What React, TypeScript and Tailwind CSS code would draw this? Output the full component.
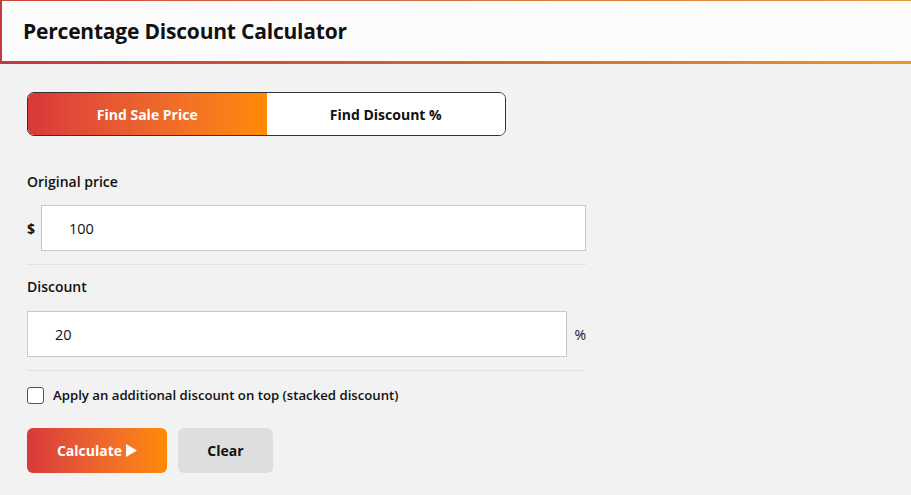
import React, { useState } from "react";

export default function App() {
  const [mode, setMode] = useState<"sale" | "pct">("sale");
  const [price, setPrice] = useState("100");
  const [disc, setDisc] = useState("20");
  const [stack, setStack] = useState(false);

  return (
    <div
      className="w-[911px] h-[495px] overflow-hidden bg-[#f2f2f2] text-[#111]"
      style={{ fontFamily: '"Open Sans", "Noto Sans", sans-serif' }}
    >
      <div className="relative h-[64px] bg-[#fbfbfb] border-l-2 border-[#c23b3d]">
        <div className="absolute left-0 right-0 top-0 h-[1px] bg-gradient-to-r from-[#c8443c] to-[#e49a3a]" />
        <div className="absolute left-[-2px] right-0 bottom-0 h-[3px] bg-gradient-to-r from-[#c03a3e] via-[#d0652e] to-[#e8962e]" />
        <div className="flex h-[61px] items-center pl-[21px] pt-[3px]">
          <h1 className="text-[21px] font-bold tracking-[-0.2px]">Percentage Discount Calculator</h1>
        </div>
      </div>

      <div className="pl-[27px] pt-[28px] w-[586px] box-content">
        <div className="flex h-[44px] w-[479px] rounded-[7px] border border-[#333] overflow-hidden">
          <button
            onClick={() => setMode("sale")}
            className={`flex-1 text-[14px] font-bold ${mode === "sale" ? "bg-gradient-to-r from-[#d8383a] to-[#ff8a00] text-white" : "bg-white text-[#111]"}`}
          >
            Find Sale Price
          </button>
          <button
            onClick={() => setMode("pct")}
            className={`flex-1 text-[14px] font-bold ${mode === "pct" ? "bg-gradient-to-r from-[#d8383a] to-[#ff8a00] text-white" : "bg-white text-[#111]"}`}
          >
            Find Discount %
          </button>
        </div>

        <div className="mt-[36px] w-[559px]">
          <label className="block text-[14px] font-semibold leading-[20px]">Original price</label>
          <div className="mt-[13px] flex items-center">
            <span className="w-[14px] text-[14px] font-bold">$</span>
            <input
              value={price}
              onChange={(e) => setPrice(e.target.value)}
              className="h-[46px] flex-1 border border-[#c8c8c8] bg-white pl-[27px] text-[14.5px] outline-none"
            />
          </div>
          <div className="mt-[13px] h-[1px] bg-[#e2e2e2]" />

          <label className="mt-[12px] block text-[14px] font-semibold leading-[20px]">Discount</label>
          <div className="mt-[14px] flex items-center">
            <input
              value={disc}
              onChange={(e) => setDisc(e.target.value)}
              className="h-[46px] flex-1 border border-[#c8c8c8] bg-white pl-[27px] text-[14.5px] outline-none"
            />
            <span className="w-[19px] text-right text-[14px]">%</span>
          </div>
          <div className="mt-[13px] h-[1px] bg-[#e2e2e2]" />

          <label className="mt-[16px] flex items-center gap-[9px] cursor-pointer">
            <span
              onClick={() => setStack(!stack)}
              className={`h-[17px] w-[17px] rounded-[3px] border border-[#555] ${stack ? "bg-[#e0602c]" : "bg-white"}`}
            />
            <span className="text-[13.2px] font-semibold leading-[17px]">Apply an additional discount on top (stacked discount)</span>
          </label>

          <div className="mt-[24px] flex gap-[11px]">
            <button className="flex h-[45px] w-[140px] items-center justify-center gap-[4px] rounded-[6px] bg-gradient-to-r from-[#d8383a] to-[#ff8a00] text-[14px] font-bold text-white">
              <span>Calculate</span>
              <svg width="11" height="13" viewBox="0 0 11 13" aria-hidden="true">
                <path d="M0 0 L11 6.5 L0 13 Z" fill="white" />
              </svg>
            </button>
            <button className="h-[45px] w-[95px] rounded-[6px] bg-[#dedede] text-[14px] font-bold text-[#111]">
              Clear
            </button>
          </div>
        </div>
      </div>
    </div>
  );
}
